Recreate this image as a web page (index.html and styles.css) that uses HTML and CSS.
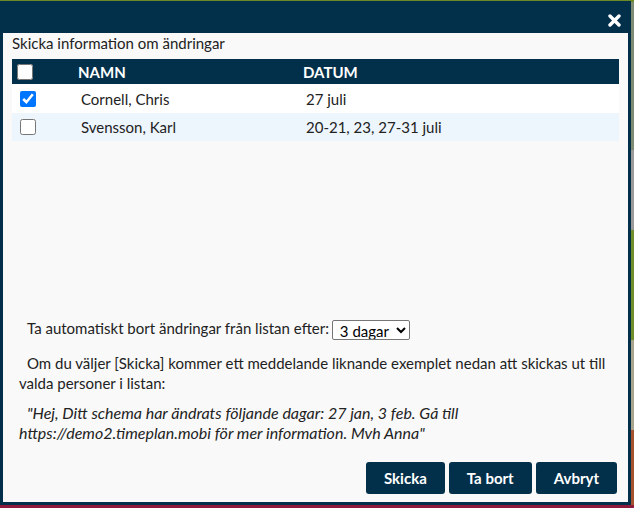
FILE: index.html
```html
<!DOCTYPE html>
<html lang="sv">
  <head>
    <meta charset="UTF-8">
    <meta name="viewport" content="width=device-width, initial-scale=1.0">
    <title>Skicka information om ändringar</title>
    <link rel="stylesheet" href="styles.css">
  </head>
  <body>
    <div class="dialog">
      <div class="titlebar">
        <button class="close" title="Stäng">
          <svg width="13" height="13" viewBox="0 0 13 13">
            <path d="M2 2 L11 11 M11 2 L2 11" stroke="#fff" stroke-width="3.4" stroke-linecap="round" fill="none"/>
          </svg>
        </button>
      </div>

      <div class="dialog-body">
        <div class="heading">Skicka information om ändringar</div>

        <div class="list">
          <div class="row head">
            <span><input type="checkbox"></span>
            <span>NAMN</span>
            <span>DATUM</span>
          </div>
          <div class="row">
            <span><input type="checkbox" checked></span>
            <span>Cornell, Chris</span>
            <span>27 juli</span>
          </div>
          <div class="row alt">
            <span><input type="checkbox"></span>
            <span>Svensson, Karl</span>
            <span>20-21, 23, 27-31 juli</span>
          </div>
        </div>

        <div class="fill"></div>

        <p class="auto">Ta automatiskt bort ändringar från listan efter:
          <select>
            <option>1 dag</option>
            <option>2 dagar</option>
            <option selected>3 dagar</option>
            <option>7 dagar</option>
          </select>
        </p>
        <p class="info">Om du väljer [Skicka] kommer ett meddelande liknande exemplet nedan att skickas ut till valda personer i listan:</p>
        <p class="info quote">"Hej, Ditt schema har ändrats följande dagar: 27 jan, 3 feb. Gå till https://demo2.timeplan.mobi för mer information. Mvh Anna"</p>

        <div class="actions">
          <button class="btn">Skicka</button>
          <button class="btn">Ta bort</button>
          <button class="btn">Avbryt</button>
        </div>
      </div>
    </div>
  </body>
</html>
```

FILE: styles.css
```css
html, body {
  margin: 0;
  height: 100%;
}

body {
  font-family: Lato, "Open Sans", sans-serif;
  font-size: 15px;
  color: #222;
  background: linear-gradient(to bottom,
    #6a8a25 0, #6a8a25 2px,
    #7f8c74 2px, #7f8c74 150px,
    #9a9a9a 150px, #9a9a9a 230px,
    #6f8f2a 230px, #6f8f2a 340px,
    #a9a48e 340px, #a9a48e 430px,
    #a5532e 430px, #a5532e 505px,
    #8b1a3b 505px);
}

.dialog {
  box-sizing: border-box;
  width: 631px;
  height: 504px;
  margin-top: 1px;
  border: 3px solid #02304a;
  background-color: #f9f9f9;
  display: flex;
  flex-direction: column;
}

.titlebar {
  height: 29px;
  flex: none;
  background-color: #02304a;
  display: flex;
  justify-content: flex-end;
  align-items: center;
}

.close {
  border: none;
  background: none;
  padding: 0;
  margin: 3px 7px 0 0;
  width: 13px;
  height: 13px;
  display: flex;
  cursor: pointer;
}

.dialog-body {
  flex: 1;
  display: flex;
  flex-direction: column;
  padding: 0 9px 8px 9px;
}

.heading {
  line-height: 20px;
}

.list {
  margin-top: 6px;
}

.row {
  display: grid;
  grid-template-columns: 66px 225px 1fr;
  align-items: center;
  height: 29px;
  padding-left: 3px;
  background-color: #fff;
}

.row.head {
  height: 25px;
  padding-left: 0;
  background-color: #02304a;
  color: #fff;
  font-weight: bold;
}

.row.alt {
  height: 28px;
  background-color: #edf5fd;
}

.row span:first-child {
  display: flex;
  padding-left: 5px;
}

.row input[type="checkbox"] {
  width: 16px;
  height: 16px;
  margin: 0;
}

.fill {
  flex: 1;
}

p {
  margin: 0;
  line-height: 20px;
  margin-left: 7px;
  text-indent: 8px;
}

.auto select {
  font-family: Lato, sans-serif;
  font-size: 15px;
  color: #000;
  height: 20px;
  width: 78px;
  padding: 0 0 0 3px;
  margin-left: -1px;
  border: 1px solid #767676;
  border-radius: 2px;
  background-color: #fff;
  vertical-align: middle;
}

.info {
  margin-top: 13px;
}

.quote {
  margin-top: 10px;
  font-size: 16px;
  font-style: italic;
}

.actions {
  display: flex;
  justify-content: flex-end;
  gap: 4px;
  margin-top: 19px;
  padding-right: 2px;
}

.btn {
  height: 32px;
  padding: 0 18px;
  border: none;
  border-radius: 3px;
  background-color: #02304a;
  color: #fff;
  font-family: Lato, sans-serif;
  font-size: 15px;
  font-weight: bold;
  cursor: pointer;
}
```
